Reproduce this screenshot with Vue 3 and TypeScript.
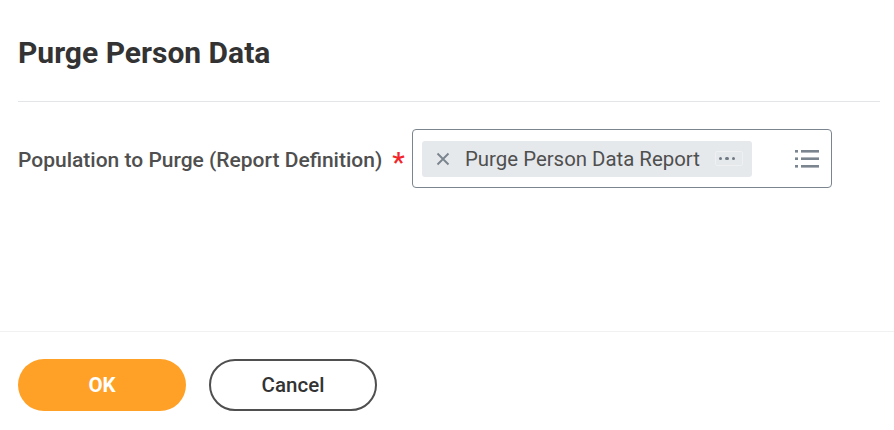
<script setup lang="ts">
const title = 'Purge Person Data'
const fieldLabel = 'Population to Purge (Report Definition)'
const pillText = 'Purge Person Data Report'
</script>

<template>
  <div class="page">
    <header class="head">
      <h1>{{ title }}</h1>
    </header>
    <main class="form">
      <label class="field-label">{{ fieldLabel }}<span class="req">*</span></label>
      <div class="prompt">
        <div class="pill">
          <svg class="remove" width="14" height="14" viewBox="0 0 14 14">
            <path d="M1.5 1.5 12.5 12.5M12.5 1.5 1.5 12.5" stroke="#7b858f" stroke-width="1.9" fill="none" />
          </svg>
          <span class="pill-text">{{ pillText }}</span>
          <span class="more">
            <i></i><i></i><i></i>
          </span>
        </div>
        <svg class="list-icon" width="24" height="18" viewBox="0 0 24 18">
          <g fill="#7b858f">
            <rect x="0" y="0" width="3" height="2.6" />
            <rect x="6" y="0" width="18" height="2.6" />
            <rect x="0" y="7.4" width="3" height="2.6" />
            <rect x="6" y="7.4" width="18" height="2.6" />
            <rect x="0" y="15" width="3" height="2.6" />
            <rect x="6" y="15" width="18" height="2.6" />
          </g>
        </svg>
      </div>
    </main>
    <footer class="foot">
      <button class="btn primary">OK</button>
      <button class="btn outline">Cancel</button>
    </footer>
  </div>
</template>

<style>
html,
body {
  margin: 0;
  background: #fff;
}
</style>

<style scoped>
.page {
  width: 894px;
  height: 430px;
  display: flex;
  flex-direction: column;
  font-family: Roboto, "Liberation Sans", sans-serif;
  background: #fff;
  overflow: hidden;
}

.head {
  margin: 0 14px 0 18px;
  height: 102px;
  box-sizing: border-box;
  border-bottom: 1px solid #e3e5e7;
  padding-top: 36px;
}

h1 {
  margin: 0;
  font-size: 30px;
  line-height: 34px;
  font-weight: 700;
  color: #333;
}

.form {
  flex: 1;
  display: flex;
  align-items: flex-start;
  padding: 27px 0 0 18px;
  border-bottom: 1px solid #f0f1f2;
}

.field-label {
  width: 394px;
  flex: none;
  margin-top: 17px;
  font-size: 21px;
  line-height: 28px;
  font-weight: 500;
  color: #4f4f4f;
  white-space: nowrap;
}

.req {
  margin-left: 10px;
  color: #f2252b;
  font-size: 28px;
  line-height: 20px;
  font-weight: 500;
  vertical-align: -5px;
}

.prompt {
  width: 420px;
  height: 59px;
  box-sizing: border-box;
  border: 1px solid #7b858f;
  border-radius: 4px;
  display: flex;
  align-items: center;
  justify-content: space-between;
  padding: 0 12px 0 9px;
}

.pill {
  width: 330px;
  height: 36px;
  box-sizing: border-box;
  background: #e6e9ec;
  border-radius: 3px;
  display: flex;
  align-items: center;
  padding-left: 14px;
}

.remove {
  flex: none;
}

.pill-text {
  margin-left: 15px;
  font-size: 20.4px;
  color: #4f4f4f;
  white-space: nowrap;
}

.more {
  margin-left: 15px;
  width: 28px;
  height: 15px;
  box-sizing: border-box;
  border: 1px solid #eef0f2;
  border-radius: 2px;
  display: flex;
  align-items: center;
  padding-left: 3px;
  gap: 3px;
}

.more i {
  width: 3.4px;
  height: 3.4px;
  border-radius: 50%;
  background: #6f7983;
}

.foot {
  height: 98px;
  flex: none;
  display: flex;
  align-items: flex-start;
  gap: 23px;
  padding: 27px 0 0 18px;
  box-sizing: border-box;
}

.btn {
  width: 168px;
  height: 52px;
  border-radius: 26px;
  font-family: inherit;
  font-size: 20.5px;
  font-weight: 500;
  box-sizing: border-box;
  cursor: pointer;
}

.primary {
  background: #ffa126;
  border: none;
  color: #fff;
  font-weight: 700;
}

.outline {
  background: #fff;
  border: 2px solid #4f4f4f;
  color: #333;
}
</style>
